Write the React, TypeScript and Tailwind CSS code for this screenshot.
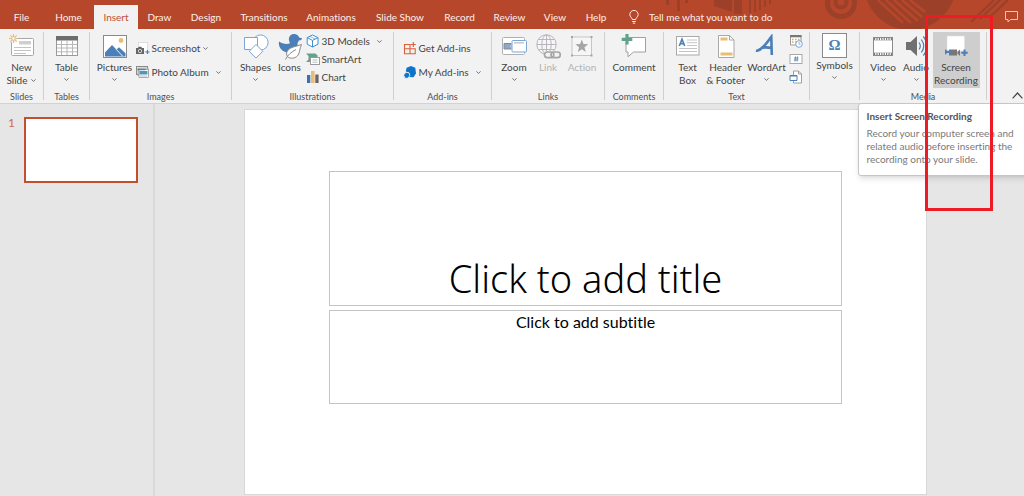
import type { ReactNode } from "react";

const tabs: { name: string; width: string }[] = [
  { name: "File", width: "w-[43px]" },
  { name: "Home", width: "w-[51px]" },
  { name: "Insert", width: "w-[44px]" },
  { name: "Draw", width: "w-[43px]" },
  { name: "Design", width: "w-[50px]" },
  { name: "Transitions", width: "w-[66px]" },
  { name: "Animations", width: "w-[68px]" },
  { name: "Slide Show", width: "w-[70px]" },
  { name: "Record", width: "w-[49px]" },
  { name: "Review", width: "w-[51px]" },
  { name: "View", width: "w-[40px]" },
  { name: "Help", width: "w-[42px]" },
];

function Chevron() {
  return (
    <svg className="h-[3px] w-[5px] shrink-0" viewBox="0 0 5 3" fill="none" stroke="#666" strokeWidth="0.9" aria-hidden="true">
      <path d="M0.4 0.4 2.5 2.4 4.6 0.4" />
    </svg>
  );
}

function Group({ label, width, children }: { label: string; width: string; children: ReactNode }) {
  return (
    <>
      <section aria-label={label || "Symbols"} className={`flex shrink-0 flex-col ${width}`}>
        <div className="flex h-[59px] items-start justify-center">{children}</div>
        <div className="text-center text-[9px] leading-3 text-[#505050]">{label}</div>
      </section>
      <div className="h-[68px] w-px shrink-0 bg-[#cfcfcf]" />
    </>
  );
}

type BigProps = {
  icon: ReactNode;
  lines: string[];
  width: string;
  menu?: "inline" | "below";
  flush?: boolean;
  active?: boolean;
  disabled?: boolean;
};

function BigButton({ icon, lines, width, menu, flush, active, disabled }: BigProps) {
  return (
    <button
      type="button"
      disabled={disabled}
      className={`flex h-[56px] shrink-0 flex-col items-center text-[10px] leading-[13px] ${width} ${flush ? "" : "pt-[2px]"} ${
        active ? "bg-[#cecece]" : ""
      } ${disabled ? "text-[#b3b3b3]" : "text-[#444]"}`}
    >
      <span className="flex h-[26px] items-center justify-center">{icon}</span>
      {lines.map((line, i) => (
        <span key={line} className={`flex items-center gap-1 whitespace-nowrap ${i === 0 ? "mt-px" : ""}`}>
          {line}
          {menu === "inline" && i === lines.length - 1 && <Chevron />}
        </span>
      ))}
      {menu === "below" && (
        <span className="mt-1">
          <Chevron />
        </span>
      )}
    </button>
  );
}

function SmallButton({ icon, label, menu, tall }: { icon: ReactNode; label: string; menu?: "near" | "far"; tall?: boolean }) {
  return (
    <button type="button" className={`flex items-center gap-[2px] whitespace-nowrap text-[10px] text-[#444] ${tall ? "h-6" : "h-[18px]"}`}>
      <span className="flex w-[14px] items-center justify-center">{icon}</span>
      <span>{label}</span>
      {menu && (
        <span className={menu === "near" ? "ml-px" : "ml-[5px]"}>
          <Chevron />
        </span>
      )}
    </button>
  );
}

const big = { className: "h-[26px] w-[26px]", viewBox: "0 0 26 26", fill: "none", "aria-hidden": true } as const;
const small = { className: "h-[14px] w-[14px]", viewBox: "0 0 14 14", fill: "none", "aria-hidden": true } as const;

const NewSlideIcon = () => (
  <svg {...big}>
    <rect x="2.5" y="4.5" width="22" height="17" rx="1" fill="#fff" stroke="#a8a8a8" />
    <path d="M10 7h12v3.500h-12z" fill="#cfcfcf" />
    <path d="M5 13.500h17M5 16.500h17M5 19.500h12" stroke="#c4c4c4" strokeWidth="1" />
    <circle cx="4.500" cy="4.500" r="4" fill="#f2f2f2" />
    <path d="M4.500 0v9M0 4.500h9M1.300 1.300l6.400 6.400M7.700 1.300 1.300 7.700" stroke="#e9bd74" strokeWidth="1.100" />
    <circle cx="4.500" cy="4.500" r="1.700" fill="#fff" stroke="#e9bd74" />
  </svg>
);

const TableIcon = () => (
  <svg {...big}>
    <rect x="2.500" y="2.500" width="21" height="19" fill="#fff" stroke="#9a9a9a" />
    <path d="M2 2h22v4.500H2z" fill="#6d6d6d" />
    <path d="M3 10.500h20M3 14h20M3 17.800h20M7.500 7v14M13 7v14M18.500 7v14" stroke="#b8b8b8" />
  </svg>
);

const PicturesIcon = () => (
  <svg {...big}>
    <rect x="1.500" y="1.500" width="23" height="22" fill="#fff" stroke="#8a8a8a" />
    <circle cx="19" cy="6.500" r="2.400" fill="#e9bd74" />
    <path d="M3 22.500v-4l7-7.500 4.500 4.500 2.500-2.300 6.500 6v3.300z" fill="#4a7fb8" />
    <path d="M14 15.200l6.500 6.800" stroke="#fff" strokeWidth="0.900" />
  </svg>
);

const ScreenshotIcon = () => (
  <svg {...small}>
    <path d="M2.500 1.500h9v9h-9z" fill="#fff" stroke="#c4c4c4" strokeDasharray="1 1" />
    <path d="M0 7h2l.7-1.300h2.600L6 7h2v6H0z" fill="#666" />
    <circle cx="4" cy="10" r="1.700" fill="#666" stroke="#eee" strokeWidth="0.800" />
    <path d="M11.500 9v4M9.500 11h4" stroke="#4a7fb8" strokeWidth="1.200" />
  </svg>
);

const AlbumIcon = () => (
  <svg {...small}>
    <rect x="0.500" y="1.500" width="11" height="8" fill="#fff" stroke="#8a8a8a" />
    <rect x="2" y="3" width="10" height="7.500" fill="#e5e5e5" stroke="#8a8a8a" strokeWidth="0.700" />
    <rect x="3" y="4.500" width="9.500" height="8" fill="#fff" stroke="#8a8a8a" strokeWidth="0.700" />
    <path d="M3.500 6h8v3.500h-8z" fill="#4a9ab8" />
    <path d="M1.500 4.500h8" stroke="#4a7fb8" strokeWidth="1.400" />
    <path d="M4 11h7" stroke="#bbb" />
  </svg>
);

const ShapesIcon = () => (
  <svg className="h-[26px] w-[26px]" viewBox="0 0 26 26" fill="#fff" stroke="#7ba5d3" aria-hidden="true">
    <circle cx="17.500" cy="8.500" r="7.600" />
    <path d="M1.500 3.500h13v12h-13z" />
    <path d="M13 10.500 19.800 17.300 13 24.100 6.200 17.300z" />
  </svg>
);

const DuckIcon = () => (
  <svg {...big}>
    <path
      d="M2 7.500C4.500 9.600 8.500 10.300 12 9.800c1-.3 1-1.100.5-1.900C10.800 4.500 12.500.4 16.500 0c3-.3 5 1.300 5.600 3.400l2.900.8c-.2 1.500-1.400 2.300-3.200 2.200-.5 1.700-1.600 2.500-1.200 4 .7 4-2 7.600-6.100 8.200H11C5 18 1 13.500 2 7.500z"
      fill="#4a7fb8"
    />
    <path d="M24.500 10.500c-5 2-10.300 2.200-13.300 5.400-2.400 2.600-2 5.800.4 7.600 3.300 1.400 7.500.6 9.600-2.600 1.800-2.800 1.300-6.400 3.300-10.400z" fill="#fff" stroke="#8a8a8a" />
    <path d="M8.500 25.500c2.500-5 6-7.500 10.500-10" stroke="#8a8a8a" />
  </svg>
);

const CubeIcon = () => (
  <svg className="h-[14px] w-[14px]" viewBox="0 0 14 14" fill="#fff" stroke="#3f8fd0" aria-hidden="true">
    <path d="M6.500 1 12 3.600v6.600L6.500 13 1.200 10.200V3.600z" />
    <path d="M1.200 3.600 6.500 6.400 12 3.600M6.500 6.400V13" fill="none" />
    <path d="M3.800 2.400 9.300 5" fill="none" strokeWidth="0.600" />
  </svg>
);

const SmartArtIcon = () => (
  <svg {...small}>
    <path d="M0 1.500h9.500L12 4 9.500 6.500H5V10H0L2.500 7.500V4z" fill="#62a28b" />
    <rect x="4.500" y="5.500" width="9" height="7" fill="#fff" stroke="#9a9a9a" />
    <path d="M6.500 8h5M6.500 10.200h5" stroke="#bbb" />
  </svg>
);

const ChartIcon = () => (
  <svg {...small}>
    <path d="M1 5h3.300v8H1z" fill="#3f6fae" />
    <path d="M5 1h3.600v12H5z" fill="#e9bd74" />
    <path d="M9.300 4.500h3.300V13H9.300z" fill="#666" />
  </svg>
);

const GetAddinsIcon = () => (
  <svg {...small}>
    <path d="M1.500 3.500H7v9.200H1.500zM7 7.800h5.200v4.900H7M1.500 7.800H7M10.300 1v5M7.800 3.500h5" stroke="#d9603b" strokeWidth="1.100" />
  </svg>
);

const MyAddinsIcon = () => (
  <svg {...small}>
    <path d="M8 1 12.300 2.800 13 8.300 10.500 12.300 5.500 12 2.800 6 3.600 2.800z" fill="#0f73c9" />
    <path d="M3 7.200 6 7.800 6.800 10.500 5.200 13.200 1.800 13.200 0.600 9.900z" fill="#0f73c9" stroke="#f2f2f2" strokeWidth="0.900" />
  </svg>
);

const ZoomIcon = () => (
  <svg {...big}>
    <rect x="1.500" y="3.500" width="22" height="17" rx="1" fill="#fff" stroke="#b0b0b0" />
    <path d="M3 9.500h7v5.500H3z" fill="#8fa9c4" stroke="#7d8c9c" />
    <path d="M9 12.200 12 7v11z" fill="#bcd3ea" />
    <rect x="11" y="6.500" width="14.500" height="11.500" rx="1" fill="#fff" stroke="#7ba5d3" />
    <path d="M13 8.800h10" stroke="#c9c9c9" strokeWidth="1.600" />
  </svg>
);

const LinkIcon = () => (
  <svg {...big} stroke="#b9b4bd">
    <circle cx="11.500" cy="10.500" r="9.700" fill="#f6f6f6" />
    <ellipse cx="11.500" cy="10.500" rx="4.700" ry="9.700" />
    <path d="M11.500 1v19M2 10.500h19M3.500 5.500h16M3.500 15.500h16" />
    <path d="M9 17h17v8H9z" fill="#f2f2f2" stroke="none" />
    <rect x="9.500" y="18" width="9.300" height="5.600" rx="2.800" stroke="#a5a5a5" strokeWidth="1.700" />
    <rect x="16" y="18" width="9.300" height="5.600" rx="2.800" stroke="#a5a5a5" strokeWidth="1.700" />
  </svg>
);

const ActionIcon = () => (
  <svg {...big}>
    <rect x="3" y="3" width="19.500" height="18.500" fill="#f6f6f6" stroke="#c6c6c6" />
    <path d="M2 2h2v2H2zM21.500 2h2v2h-2zM2 20.500h2v2H2zM21.500 20.500h2v2h-2z" fill="#a5a5a5" />
    <path d="m12.800 5.500 1.700 4.600 4.800.2-3.800 3 1.300 4.800-4-2.800-4 2.800 1.300-4.800-3.800-3 4.800-.2z" fill="#a5a5a5" />
  </svg>
);

const CommentIcon = () => (
  <svg {...big}>
    <path d="M6.500 3.500h18v14.500h-12l-5.500 4.800v-4.800h-2v-9" fill="#fff" stroke="#a0a0a0" />
    <path d="M6 0v10.500M0.700 5.300h10.600" stroke="#62a28b" strokeWidth="3.200" />
  </svg>
);

const TextBoxIcon = () => (
  <svg {...big}>
    <rect x="1.500" y="2.500" width="22.500" height="18.500" fill="#fff" stroke="#a8a8a8" />
    <path d="M4.300 12 7 5.200 9.700 12M5.300 9.800h3.500" stroke="#4a7fb8" strokeWidth="1.600" />
    <path d="M12 6h10M12 8.700h10M12 11.500h10M4 14.500h18M4 17.500h18" stroke="#c4c4c4" />
  </svg>
);

const HeaderFooterIcon = () => (
  <svg {...big}>
    <path d="M5.500 1.500h11l4.500 4.500v17.500h-15.500z" fill="#fff" stroke="#a8a8a8" />
    <path d="M16.500 1.500v4.500h4.500" stroke="#a8a8a8" />
    <path d="M7.500 3.500h7v3h-7zM7.500 18.500h12v3h-12z" fill="#e9bd74" />
  </svg>
);

const WordArtIcon = () => (
  <svg {...big}>
    <path d="M3 16.800C9 15.500 14 7 17.300 2.800L17.800 21M2 16.500c3 1 4.500-1 6-2.800 3.500-.6 6-.4 9.300.2" stroke="#4a7fb8" strokeWidth="2.600" />
  </svg>
);

const DateIcon = () => (
  <svg {...small}>
    <path d="M1.500 1.500h10.500v9.500H1.500z" fill="#fff" stroke="#9a9a9a" />
    <path d="M1 1h11.500v2.300H1z" fill="#777" />
    <path d="M3 5.500h1.500M6 5.500h1.500M9 5.500h1.500M3 8h1.500M6 8h1.500" stroke="#e3a850" strokeWidth="1.400" />
    <circle cx="10" cy="10" r="3.300" fill="#fff" stroke="#7ba5d3" />
    <path d="M10 8v2.200h1.600" stroke="#7ba5d3" strokeWidth="0.800" />
  </svg>
);

const NumberIcon = () => (
  <svg {...small}>
    <rect x="1" y="2.500" width="12" height="9" fill="#fff" stroke="#a8a8a8" />
    <path d="M6.500 4.500 6 9.500M8.500 4.500 8 9.500M5 6h4.500M4.800 8h4.500" stroke="#4a7fb8" strokeWidth="0.800" />
  </svg>
);

const ObjectIcon = () => (
  <svg {...small}>
    <path d="M4.500 1h5l3 3v9h-8z" fill="#fff" stroke="#a0a0a0" />
    <path d="M9.500 1v3h3" stroke="#a0a0a0" />
    <path d="M1 5.500h7v5H1z" fill="#fff" stroke="#4a7fb8" />
    <path d="M1 5.800h7" stroke="#4a7fb8" strokeWidth="1.400" />
  </svg>
);

const OmegaIcon = () => (
  <span className="flex h-[25px] w-[25px] items-center justify-center border border-[#8a8a8a] bg-white font-['Liberation_Serif',serif] text-[15px] leading-none font-bold text-[#4a7fb8]">
    Ω
  </span>
);

const VideoIcon = () => (
  <svg {...big}>
    <rect x="3.500" y="3.500" width="19" height="18" fill="#fff" stroke="#8a8a8a" />
    <path d="M4 5h18M4 20h18" stroke="#777" strokeWidth="2" strokeDasharray="1.200 1.200" />
    <path d="M4 6.500h18M4 18.500h18" stroke="#b8b8b8" strokeWidth="0.600" />
  </svg>
);

const AudioIcon = () => (
  <svg {...big}>
    <path d="M3 8h4.500L14 2v20L7.500 16H3z" fill="#707070" />
    <path d="M16 8.500c1.500 2 1.500 5 0 7M18.300 5.500c3 4 3 9 0 13M20.300 2.500c4.500 5.500 4.500 13.500 0 19" stroke="#4a7fb8" strokeWidth="1.200" />
  </svg>
);

const RecordingIcon = () => (
  <svg {...big}>
    <rect x="4" y="2" width="17.500" height="15" fill="#fff" stroke="#ddd" strokeDasharray="1 1" />
    <path d="M6 15.500h8v6H6z" fill="#777" />
    <path d="M2 15.500h1.500v1.200h5v2.400h-5v1.200H2z" fill="#4a7fb8" />
    <path d="M14.500 18 17 15.500v6.500l-2.500-2.500z" fill="#777" />
    <path d="M21.500 15.500v6.500M18.300 18.800h6.400" stroke="#4a7fb8" strokeWidth="2" />
  </svg>
);

function HeaderArt() {
  return (
    <svg className="absolute top-0 right-0 h-[29px] w-[384px]" viewBox="0 0 384 29" fill="none" aria-hidden="true">
      <g fill="#9c402a">
        <path d="M26 0h3v5h-3zM37 0h3v11h-3zM45 0h3v3h-3z" />
        <path d="M74 0h18v12L74 6zM94 0h8v14h-8z" />
        <path d="M109 0h2v13h-2zM114 0h2v12h-2zM119 0h2v10h-2zM124 0h2v7h-2zM129 0h2v4h-2z" />
        <circle cx="270" cy="-16" r="46" />
      </g>
      <circle cx="201" cy="3" r="13.500" stroke="#9c402a" strokeWidth="5" />
      <circle cx="201" cy="2" r="5.500" stroke="#9c402a" strokeWidth="4" />
      <path d="M238 0 263 23M246 0l25 23M254 0l24 21M262 0l20 17M270 0l15 12" stroke="#b7472a" strokeWidth="2.400" />
      <path d="M331 22 354 0M340 19 360 0M350 17 368 0" stroke="#9c402a" strokeWidth="2.400" />
    </svg>
  );
}

export default function App() {
  return (
    <div className="flex min-h-screen flex-col overflow-hidden bg-[#e6e6e6] font-['Lato','Noto_Sans',sans-serif] [font-variant-ligatures:none]">
      <header className="relative flex h-[29px] items-end bg-[#b7472a] text-[10px] text-[#fdf1ed]">
        <HeaderArt />
        <nav className="relative flex shrink-0">
          {tabs.map((tab) => (
            <button
              key={tab.name}
              type="button"
              className={`h-6 shrink-0 whitespace-nowrap ${tab.width} ${tab.name === "Insert" ? "bg-[#f2f2f2] text-[#c2502f]" : ""}`}
            >
              {tab.name}
            </button>
          ))}
        </nav>
        <button type="button" className="relative ml-3 flex h-6 shrink-0 items-center gap-[10px] whitespace-nowrap">
          <svg className="h-[14px] w-[10px]" viewBox="0 0 10 14" fill="none" stroke="#fbeae5" strokeWidth="1" aria-hidden="true">
            <path d="M3.200 9.500C3.200 7.500.8 7 .8 4.600a4.200 4.200 0 0 1 8.400 0C9.200 7 6.800 7.500 6.800 9.500zM3.200 11.500h3.600M3.800 13.200h2.400" />
          </svg>
          Tell me what you want to do
        </button>
        <button type="button" aria-label="Comments" className="relative mr-[6px] mb-[6px] ml-auto">
          <svg className="block h-[12px] w-[13px]" viewBox="0 0 13 12" fill="none" stroke="#f0c4b8" aria-hidden="true">
            <path d="M.5.5h12v8H5.500L3 11V8.500H.5z" />
          </svg>
        </button>
      </header>

      <div className="flex h-[75px] items-start border-b border-[#d2d2d2] bg-[#f2f2f2] pt-[3px]">
        <Group label="Slides" width="w-[43px]">
          <BigButton icon={<NewSlideIcon />} lines={["New", "Slide"]} width="w-[40px]" menu="inline" />
        </Group>
        <Group label="Tables" width="w-[45px]">
          <BigButton icon={<TableIcon />} lines={["Table"]} width="w-[40px]" menu="below" />
        </Group>
        <Group label="Images" width="w-[141px]">
          <BigButton icon={<PicturesIcon />} lines={["Pictures"]} width="w-[42px]" menu="below" />
          <div className="w-[92px] pt-1">
            <SmallButton tall icon={<ScreenshotIcon />} label="Screenshot" menu="near" />
            <SmallButton tall icon={<AlbumIcon />} label="Photo Album" menu="far" />
          </div>
        </Group>
        <Group label="Illustrations" width="w-[161px]">
          <BigButton icon={<ShapesIcon />} lines={["Shapes"]} width="w-[36px]" menu="below" />
          <BigButton icon={<DuckIcon />} lines={["Icons"]} width="w-[32px]" />
          <div className="w-[82px]">
            <SmallButton icon={<CubeIcon />} label="3D Models" menu="far" />
            <SmallButton icon={<SmartArtIcon />} label="SmartArt" />
            <SmallButton icon={<ChartIcon />} label="Chart" />
          </div>
        </Group>
        <Group label="Add-ins" width="w-[97px]">
          <div className="w-[80px] pt-1">
            <SmallButton tall icon={<GetAddinsIcon />} label="Get Add-ins" />
            <SmallButton tall icon={<MyAddinsIcon />} label="My Add-ins" menu="far" />
          </div>
        </Group>
        <Group label="Links" width="w-[112px]">
          <BigButton icon={<ZoomIcon />} lines={["Zoom"]} width="w-[34px]" menu="below" />
          <BigButton icon={<LinkIcon />} lines={["Link"]} width="w-[34px]" disabled />
          <BigButton icon={<ActionIcon />} lines={["Action"]} width="w-[34px]" disabled />
        </Group>
        <Group label="Comments" width="w-[58px]">
          <BigButton icon={<CommentIcon />} lines={["Comment"]} width="w-[48px]" />
        </Group>
        <Group label="Text" width="w-[145px]">
          <BigButton icon={<TextBoxIcon />} lines={["Text", "Box"]} width="w-[34px]" />
          <BigButton icon={<HeaderFooterIcon />} lines={["Header", "& Footer"]} width="w-[42px]" />
          <BigButton icon={<WordArtIcon />} lines={["WordArt"]} width="w-[40px]" menu="below" />
          <div className="flex w-4 flex-col items-end">
            <button type="button" aria-label="Date and Time" className="flex h-[18px] items-center">
              <DateIcon />
            </button>
            <button type="button" aria-label="Slide Number" className="flex h-[18px] items-center">
              <NumberIcon />
            </button>
            <button type="button" aria-label="Object" className="flex h-[18px] items-center">
              <ObjectIcon />
            </button>
          </div>
        </Group>
        <Group label="" width="w-[49px]">
          <BigButton icon={<OmegaIcon />} lines={["Symbols"]} width="w-[44px]" menu="below" flush />
        </Group>
        <Group label="Media" width="w-[126px]">
          <BigButton icon={<VideoIcon />} lines={["Video"]} width="w-[33px]" menu="below" />
          <BigButton icon={<AudioIcon />} lines={["Audio"]} width="w-[33px]" menu="below" />
          <div className="relative">
            <BigButton icon={<RecordingIcon />} lines={["Screen", "Recording"]} width="w-[47px]" active />
            <div
              role="tooltip"
              className="absolute top-[71px] left-[-75px] z-10 w-[176px] rounded-[3px] border border-[#c6c6c6] bg-white px-2 py-[5px] text-[10px] text-[#7a7a7a] shadow-md"
            >
              <p className="leading-[14px] font-bold text-[#555]">Insert Screen Recording</p>
              <p className="mt-1 pb-1 leading-[13px] whitespace-nowrap">
                Record your computer screen and
                <br />
                related audio before inserting the
                <br />
                recording onto your slide.
              </p>
            </div>
            <div className="pointer-events-none absolute top-[-17px] left-[-8px] z-20 h-[196px] w-[68px] border-3 border-[#ed1c24]" />
          </div>
        </Group>
        <button type="button" aria-label="Collapse the Ribbon" className="mt-[60px] mr-px ml-auto">
          <svg className="block h-[7px] w-[11px]" viewBox="0 0 11 7" fill="none" stroke="#444" strokeWidth="1.200" aria-hidden="true">
            <path d="M.6 6.300 5.500 1l4.900 5.300" />
          </svg>
        </button>
      </div>

      <div className="flex flex-1">
        <aside className="flex w-[155px] shrink-0 items-start gap-3 border-r-2 border-[#dadada] pt-3 pl-2">
          <span className="w-1 text-[12px] leading-[14px] text-[#d2694d]">1</span>
          <button type="button" aria-label="Slide 1" className="mt-px h-[66px] w-[114px] border-2 border-[#c0502f] bg-white" />
        </aside>
        <main className="min-w-0 flex-1 pt-[5px] pr-[97px] pb-[2px] pl-[89px]">
          <div className="aspect-[682/385] border border-[#d8d8d8] bg-white px-[84px] pt-[61px]">
            <div className="flex h-[135px] items-end justify-center border border-[#c4c4c4] font-['Noto_Sans',sans-serif] text-[38px] leading-[54px] font-light text-black">
              Click to add title
            </div>
            <div className="mt-1 flex h-[94px] items-start justify-center border border-[#c4c4c4] text-[16px] leading-[22px] text-black">
              Click to add subtitle
            </div>
          </div>
        </main>
      </div>
    </div>
  );
}
